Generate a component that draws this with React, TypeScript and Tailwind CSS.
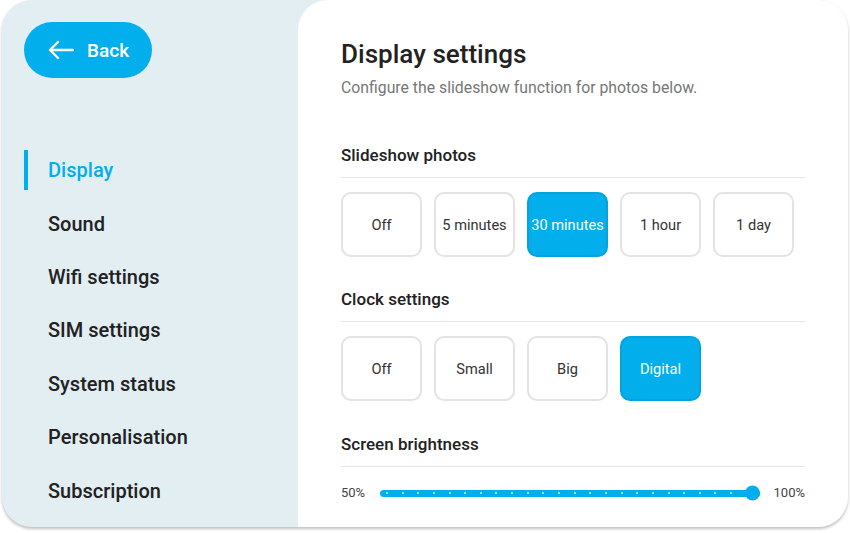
import React from 'react';

const navItems = ['Display', 'Sound', 'Wifi settings', 'SIM settings', 'System status', 'Personalisation', 'Subscription'];
const slideshow = ['Off', '5 minutes', '30 minutes', '1 hour', '1 day'];
const clock = ['Off', 'Small', 'Big', 'Digital'];

const medium = { fontFamily: '"Roboto Medium", Roboto, "Liberation Sans", sans-serif' };

const Option = ({ label, active }: { label: string; active?: boolean }) => (
  <button
    className={`w-[81px] h-[65px] rounded-[10px] border-2 text-[14.6px] pt-[3px] flex items-center justify-center ${
      active ? 'bg-[#02aeec] border-[#03a3de] text-white' : 'bg-white border-[#e3e3e3] text-[#333]'
    }`}
  >
    {label}
  </button>
);

const Section = ({ title, className = '' }: { title: string; className?: string }) => (
  <div
    className={`text-[17px] leading-[24px] font-medium text-[#222] pb-[10px] border-b border-[#e6e6e6] ${className}`}
    style={medium}
  >
    {title}
  </div>
);

export default function App() {
  const ticks = Array.from({ length: 24 });
  return (
    <div className="w-[850px] h-[533px] bg-white" style={{ fontFamily: 'Roboto, "Liberation Sans", sans-serif' }}>
      <div className="ml-[2px] w-[846px] h-[527px] rounded-[30px] overflow-hidden flex bg-[#e3eef3] shadow-[0_2px_3px_rgba(0,0,0,0.25)]">
        {/* sidebar */}
        <div className="w-[296px] pt-[22px] pl-[22px]">
          <button
            className="w-[128px] h-[56px] rounded-full bg-[#02aeec] text-white flex items-center pl-[24px] gap-[13px] text-[19px] font-medium"
            style={medium}
          >
            <svg width="26" height="20" viewBox="0 0 26 20" fill="none" stroke="white" strokeWidth="2.4" strokeLinecap="round" strokeLinejoin="round">
              <path d="M25 10H2M10 2L2 10l8 8" />
            </svg>
            <span className="pt-[3px]">Back</span>
          </button>
          <div className="mt-[65px] flex flex-col">
            {navItems.map((item, i) => (
              <div key={item} className="h-[53.4px] flex items-center gap-[20px]">
                <div className={`w-[4px] h-[40px] ${i === 0 ? 'bg-[#02aeec]' : ''}`} />
                <span
                  className={`text-[20px] font-medium pt-[1px] ${i === 0 ? 'text-[#02aeec]' : 'text-[#222]'}`}
                  style={medium}
                >
                  {item}
                </span>
              </div>
            ))}
          </div>
        </div>

        {/* content */}
        <div className="flex-1 bg-white rounded-tl-[30px] pl-[43px] pr-[43px] pt-[38px]">
          <h1 className="text-[26px] leading-[32px] font-medium text-[#222]" style={medium}>
            Display settings
          </h1>
          <p className="mt-[8px] text-[15.8px] leading-[20px] text-[#777]">Configure the slideshow function for photos below.</p>

          <Section title="Slideshow photos" className="mt-[45px]" />
          <div className="mt-[14px] flex gap-[12px]">
            {slideshow.map((s) => (
              <Option key={s} label={s} active={s === '30 minutes'} />
            ))}
          </div>

          <Section title="Clock settings" className="mt-[30px]" />
          <div className="mt-[14px] flex gap-[12px]">
            {clock.map((s) => (
              <Option key={s} label={s} active={s === 'Digital'} />
            ))}
          </div>

          <Section title="Screen brightness" className="mt-[31px]" />
          <div className="mt-[16px] h-[20px] flex items-center text-[13px] text-[#444]">
            <span className="w-[39px]">50%</span>
            <div className="relative w-[380px] h-[7px] rounded-full bg-[#02aeec] flex items-center justify-between pl-[6px] pr-[12px]">
              {ticks.map((_, i) => (
                <span key={i} className="w-[2px] h-[2px] rounded-full bg-white/80" />
              ))}
              <span className="absolute right-0 top-1/2 -translate-y-1/2 w-[15px] h-[15px] rounded-full bg-[#02aeec]" />
            </div>
            <span className="ml-auto">100%</span>
          </div>
        </div>
      </div>
    </div>
  );
}
